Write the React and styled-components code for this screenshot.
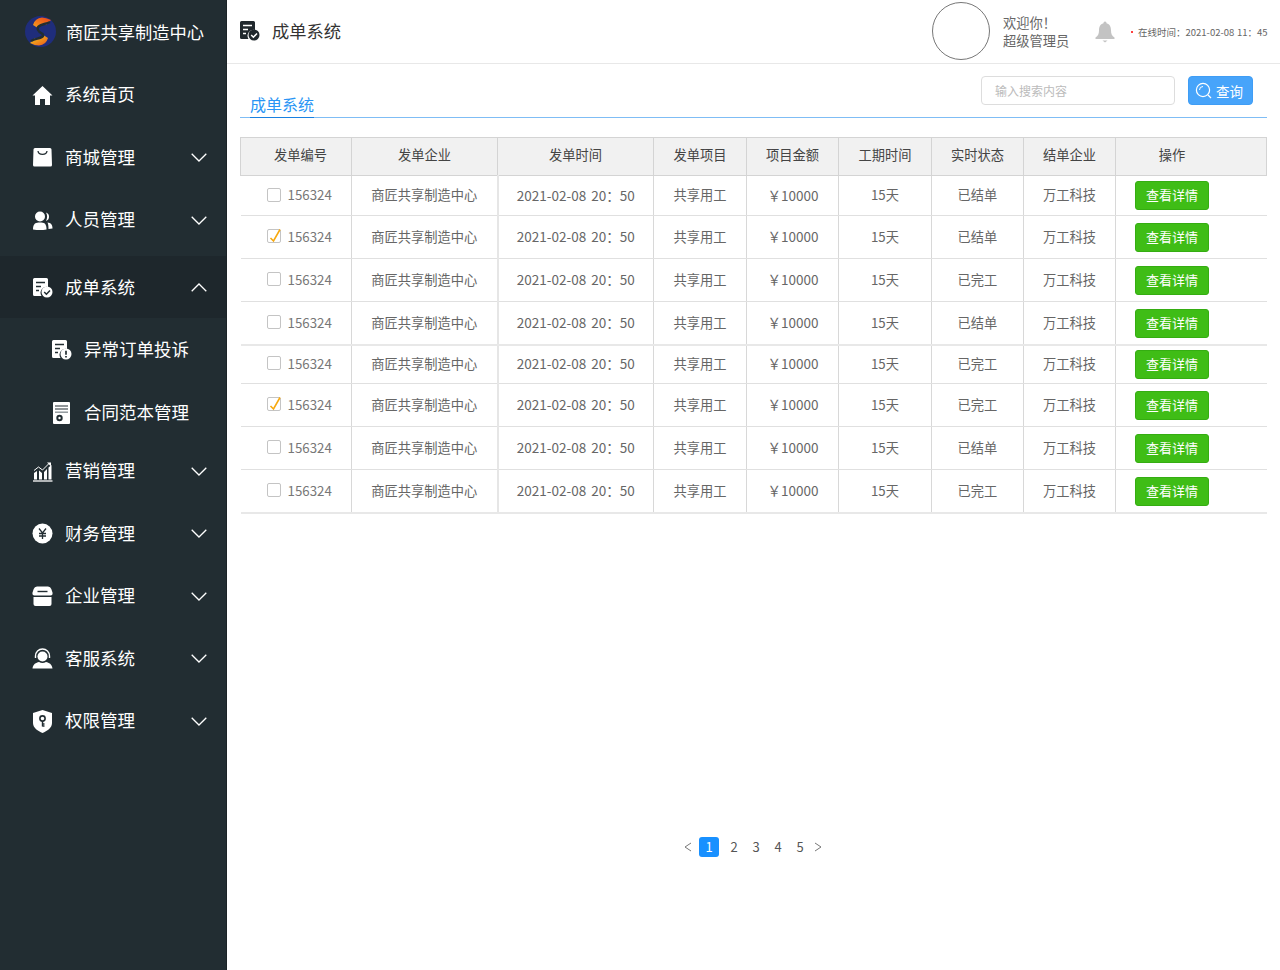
import React from "react";
import styled, { createGlobalStyle } from "styled-components";

const Global = createGlobalStyle`
  html, body { margin: 0; padding: 0; background: #fff; }
  body { font-family: "Noto Sans CJK SC", "Noto Sans", sans-serif; }
  * { box-sizing: border-box; }
`;
const Page = styled.div`display: flex; width: 1280px; height: 970px; overflow: hidden;`;
const Sidebar = styled.aside`
  width: 227px; flex: none; height: 970px; background: #222d32; border-right: 1px solid #1b2327;
  display: flex; flex-direction: column; color: #fff;
`;
const Brand = styled.div`
  height: 64px; display: flex; align-items: center; padding: 0 0 2px 25px; gap: 10px;
  font-size: 17.25px; color: #fff; white-space: nowrap;
`;
const NavItem = styled.div`
  height: ${p => p.$h}px; margin-top: ${p => p.$mt || 0}px; display: flex; align-items: center;
  padding-left: ${p => (p.$sub ? 51 : 32)}px; padding-right: 19px;
  background: ${p => (p.$active ? "#1e272c" : "transparent")};
  font-size: 17.5px; color: #fff; white-space: nowrap;
`;
const NavIcon = styled.span`width: 21px; height: 21px; flex: none; display: flex; align-items: center; justify-content: center; margin-right: 12px;`;
const NavLabel = styled.span`flex: 1; margin-bottom: ${p => (p.$active ? 1 : 3)}px;`;

const Main = styled.main`flex: 1; min-width: 0; display: flex; flex-direction: column;`;
const Topbar = styled.header`
  height: 64px; flex: none; border-bottom: 1px solid #e8e8e8; display: flex; align-items: center;
  padding: 0 13px; color: #333;
`;
const TopTitle = styled.div`display: flex; align-items: center; gap: 12px; font-size: 17.25px; color: #333; flex: 1; padding-bottom: 2px; margin-left: -1px;`;
const Avatar = styled.div`width: 58px; height: 58px; border-radius: 50%; border: 1px solid #777; background: #fff; flex: none; margin-left: -1px; margin-bottom: 1px;`;
const Welcome = styled.div`margin: 0 0 0 13px; font-size: 13.25px; line-height: 18px; color: #666; width: 92px;`;
const Status = styled.div`display: flex; align-items: center; font-size: 9.5px; color: #666; margin-left: 16px; width: 136px; white-space: nowrap; word-spacing: 0.5px;`;
const Dot = styled.span`width: 2px; height: 2px; flex: none; border-radius: 50%; background: #f00; margin-right: 5px;`;

const Content = styled.div`padding: 12px 13px 0 13px; flex: 1; display: flex; flex-direction: column;`;
const TabBar = styled.div`
  height: 42px; flex: none; border-bottom: 1px solid #7fbdf5; display: flex; align-items: flex-end; justify-content: space-between;
  padding-left: 10px; position: relative;
`;
const Tab = styled.div`
  color: #2a96f5; font-size: 16px; line-height: 21px; height: 24px; border-bottom: 1px solid #1a80e0; margin-bottom: -1px; width: 64px; white-space: nowrap;
`;
const Search = styled.div`display: flex; align-items: flex-start; gap: 13px; align-self: flex-start; padding-right: 14px;`;
const SearchBox = styled.div`
  width: 194px; height: 29px; border: 1px solid #ddd; border-radius: 4px; padding-left: 13px; font-size: 12px; line-height: 27px; color: #bbb; background: #fff;
`;
const SearchBtn = styled.div`
  width: 65px; height: 29px; border-radius: 4px; background: #47a4fa; border: 1px solid #3f9df5; color: #fff; font-size: 13.5px; display: flex; align-items: center; padding-left: 6px; gap: 4px;
`;

const Table = styled.table`
  margin-top: 19px; width: 1026px; border-collapse: collapse; table-layout: fixed; font-size: 13.25px; color: #666;
`;
const Th = styled.th`
  height: 38px; background: #f1f1f1; border: 1px solid #d4d4d4; font-weight: 400; color: #444; font-size: 13.25px; padding: 0 0 5px;
  text-align: center;
  &:first-child { padding-left: 9px; }
  &:last-child { padding-right: 38px; }
`;
const Td = styled.td`
  border-bottom: ${p => (p.$thick ? "2px solid #e8e8e8" : "1px solid #e0e0e0")}; border-left: 1px solid #d8d8d8; padding: ${p => (p.$thick ? 1 : 0)}px 0 2px; text-align: center; white-space: nowrap;
  &:first-child { border-left: none; }
  &:last-child { border-right: none; }
  &:nth-child(3) { border-left: 2px solid #e6e6e6; }
`;
const Row = styled.tr`height: ${p => p.$h}px;`;
const IdCell = styled.div`display: flex; align-items: center; justify-content: flex-start; padding-left: 26px; gap: 7px; font-size: 13.3px; color: #777;`;
const Check = styled.span`width: 14px; height: 14px; border: 1px solid #c4c4c4; border-radius: 2px; background: #fff; display: inline-flex; position: relative; flex: none;`;
const Tick = styled.svg`position: absolute; left: 0; top: -2px;`;
const ActionBtn = styled.span`
  display: inline-block; width: 74px; height: 29px; line-height: 25px; border-radius: 3px; background: #3fbd16; border: 1px solid #35ad12; color: #fff; font-size: 13px; text-align: center;
`;
const ActionWrap = styled.div`padding: 2px 0 0 19px; text-align: left; display: flex;`;
const Money = styled.span`font-size: 13.5px; margin-left: 1px;`;
const DateText = styled.span`font-size: 13.5px; word-spacing: 2px;`;

const Pager = styled.div`
  margin-top: 323px; display: flex; align-items: center; justify-content: center; font-size: 13px; color: #555; padding-right: 3px;
`;
const PageNum = styled.span`
  width: ${p => (p.$active ? 20 : 22)}px; height: 20px; line-height: 20px; margin: ${p => (p.$active ? "0 4px 0 2px" : "0")}; text-align: center; border-radius: 3px;
  background: ${p => (p.$active ? "#1890ff" : "transparent")}; color: ${p => (p.$active ? "#fff" : "#555")};
`;
const Arrow = styled.svg`flex: none; margin: 0 ${p => p.$m || 0}px;`;

const W = "#fff", D = "#222d32";
const Home = () => (<svg width="21" height="21" viewBox="0 0 21 21"><path d="M10.5 1 L20.5 10.5 L18 10.5 L18 20 L13 20 L13 14 L8 14 L8 20 L3 20 L3 10.5 L0.5 10.5 Z" fill={W}/></svg>);
const Bag = () => (<svg width="21" height="21" viewBox="0 0 21 21"><path d="M3 1 H18 a1.5 1.5 0 0 1 1.5 1.5 L20 18 a1.5 1.5 0 0 1 -1.5 1.5 H2.5 A1.5 1.5 0 0 1 1 18 L1.5 2.5 A1.5 1.5 0 0 1 3 1Z" fill={W}/><path d="M6 4 C6.5 8.5 14.5 8.5 15 4" fill="none" stroke={D} strokeWidth="1.3"/></svg>);
const Users = () => (<svg width="21" height="21" viewBox="0 0 21 21"><circle cx="8" cy="6.5" r="5" fill={W}/><path d="M1 19.5 C1 13 4 12.5 8 12.5 C12 12.5 14.5 13 14.5 19.5 Q8 20.5 1 19.5Z" fill={W}/><path d="M14 2.5 A4.5 4.5 0 0 1 14 11 C15.5 8 15.5 5 14 2.5Z M15.5 12.5 C19 13 20.5 14.5 20.5 18.5 L16.5 19 C16.5 16 16.3 14 15.5 12.5Z" fill={W}/></svg>);
const Order = ({ badge = "check", fill = W, bg = D, size = 21 }) => (
  <svg width={size} height={size} viewBox="0 0 21 21">
    <path d="M2.5 1 H14.5 A1.5 1.5 0 0 1 16 2.5 V10 A6 6 0 0 0 9.5 19 H2.5 A1.5 1.5 0 0 1 1 17.5 V2.5 A1.5 1.5 0 0 1 2.5 1Z" fill={fill}/>
    <path d="M4 5.5 H13 M4 9.5 H9 M4 13.5 H7" stroke={bg} strokeWidth="1.6"/>
    <circle cx="15" cy="15" r="5.5" fill={fill}/>
    {badge === "check"
      ? <path d="M12.2 15 L14.4 17.2 L18 13.4" fill="none" stroke={bg} strokeWidth="1.5"/>
      : <path d="M15 11.8 V15.8 M15 16.9 V18.4" stroke={bg} strokeWidth="1.7"/>}
  </svg>
);
const Contract = () => (<svg width="21" height="24" viewBox="0 0 21 24"><rect x="2" y="1" width="17" height="22" rx="1" fill={W}/><path d="M4 5 H17 M4 8 H17" stroke={D} strokeWidth="1.2"/><rect x="4" y="10.5" width="13" height="1.4" fill="#8a9296"/><circle cx="8.5" cy="17" r="3.2" fill={D}/><circle cx="8.5" cy="17" r="1.2" fill={W}/></svg>);
const Chart = () => (<svg width="21" height="21" viewBox="0 0 21 21"><path d="M1 20 H20.5" stroke={W} strokeWidth="1.3"/><path d="M2 18.5 V12 L5 10 V18.5Z M7 18.5 V9.5 L10 12 V18.5Z M12 18.5 V11 L15 8 V18.5Z M16.5 18.5 V6.5 L19.5 4 V18.5Z" fill={W}/><path d="M2 9.5 L6.5 6 L10.5 9 L17 2.5" fill="none" stroke={W} strokeWidth="1"/><path d="M15 1.5 H19 V5.5Z" fill={W}/></svg>);
const Yen = () => (<svg width="21" height="21" viewBox="0 0 21 21"><circle cx="10.5" cy="10.5" r="10" fill={W}/><path d="M7 5.5 L10.5 10 L14 5.5 M10.5 10 V16 M7 10.5 H14 M7 13 H14" fill="none" stroke={D} strokeWidth="1.3"/></svg>);
const Store = () => (<svg width="21" height="21" viewBox="0 0 21 21"><path d="M5 0.5 H16 Q18.5 0.5 19.3 3 L20.5 6.5 Q21 9.5 18.5 9.5 H2.5 Q0 9.5 0.5 6.5 L1.7 3 Q2.5 0.5 5 0.5Z" fill={W}/><path d="M1.5 11 H19.5 V18 Q19.5 20 17.5 20 H3.5 Q1.5 20 1.5 18Z" fill={W}/><path d="M5.5 5.5 H15.5" stroke={D} strokeWidth="1.4"/></svg>);
const Service = () => (<svg width="21" height="21" viewBox="0 0 21 21"><path d="M3.5 10 V8 A7 7 0 0 1 17.5 8 V10" fill="none" stroke={W} strokeWidth="1.4"/><circle cx="10.5" cy="8.5" r="5" fill={W}/><path d="M0.5 20.5 C1 16 4 14.8 7 14 Q10.5 16 14 14 C17 14.8 20 16 20.5 20.5Z" fill={W}/></svg>);
const Shield = () => (<svg width="21" height="24" viewBox="0 0 21 24"><path d="M10.5 1 L20 4 V14 C20 19 15 22 10.5 24 C6 22 1 19 1 14 V4Z" fill={W}/><circle cx="10.5" cy="9.5" r="2.6" fill="none" stroke={D} strokeWidth="1.6"/><path d="M10.5 12 V17.5 M10.5 15 H12.5 M10.5 17 H12.5" stroke={D} strokeWidth="1.4"/></svg>);
const Chevron = ({ up }) => (<svg width="16" height="9" viewBox="0 0 16 9" style={{ flex: "none" }}><path d={up ? "M0.7 8.3 L8 1 L15.3 8.3" : "M0.7 0.7 L8 8 L15.3 0.7"} fill="none" stroke={W} strokeWidth="1.3"/></svg>);
const Logo = () => (
  <svg width="31" height="31" viewBox="0 0 31 31" style={{ flex: "none" }}>
    <defs>
      <linearGradient id="lgTop" x1="0" y1="1" x2="1" y2="0"><stop offset="0" stopColor="#f7a01c"/><stop offset="1" stopColor="#e8401c"/></linearGradient>
      <linearGradient id="lgBot" x1="0" y1="0" x2="1" y2="1"><stop offset="0" stopColor="#f9d21c"/><stop offset="1" stopColor="#e9541c"/></linearGradient>
    </defs>
    <circle cx="15.5" cy="15.5" r="15.5" fill="#1f2d7b"/>
    <path d="M8 9 Q10 2 17 1.5 Q21 1.5 26 4 L21 9 Q16 8 12 11.5Z" fill="url(#lgTop)"/>
    <path d="M23 22 Q21 29 14 29.5 Q10 29.5 5 27 L10 22 Q15 23 19 19.5Z" fill="url(#lgBot)"/>
    <path d="M25 6 C18 9 11 9 13 14 C15 18 19 17 18 20 C16 23 10 22 6 25" fill="none" stroke={D} strokeWidth="2.4"/>
  </svg>
);

const Bell = () => (<svg width="20" height="22" viewBox="0 0 20 22"><path d="M10 0.5 a1.5 1.5 0 0 1 1.5 1.7 C15 3 16 6 16 9.5 C16 13 17 15 19.5 16.5 V18 H0.5 V16.5 C3 15 4 13 4 9.5 C4 6 5 3 8.5 2.2 A1.5 1.5 0 0 1 10 0.5Z" fill="#c3c3c3"/><path d="M7.5 19.5 H12.5 L10 21.5Z" fill="#c3c3c3"/></svg>);
const Lens = () => (<svg width="17" height="17" viewBox="0 0 17 17" style={{ flex: "none" }}><circle cx="8" cy="8" r="6.6" fill="none" stroke="#fff" strokeWidth="1.2"/><path d="M13 13 L16 16" stroke="#fff" strokeWidth="1.3"/><path d="M4.5 8 A3.5 3.5 0 0 1 8 4.5" fill="none" stroke="#fff" strokeWidth="1"/></svg>);

const nav = [
  { label: "系统首页", icon: <Home />, h: 62 },
  { label: "商城管理", icon: <Bag />, h: 63, chev: "down" },
  { label: "人员管理", icon: <Users />, h: 62, chev: "down" },
  { label: "成单系统", icon: <Order />, h: 62, mt: 5, chev: "up", active: true },
  { label: "异常订单投诉", icon: <Order badge="alert" />, h: 63, sub: true },
  { label: "合同范本管理", icon: <Contract />, h: 63, sub: true },
  { label: "营销管理", icon: <Chart />, h: 62, mt: -4, chev: "down" },
  { label: "财务管理", icon: <Yen />, h: 63, chev: "down" },
  { label: "企业管理", icon: <Store />, h: 62, chev: "down" },
  { label: "客服系统", icon: <Service />, h: 63, chev: "down" },
  { label: "权限管理", icon: <Shield />, h: 62, chev: "down" },
];
const cols = [["发单编号", 111], ["发单企业", 146], ["发单时间", 156], ["发单项目", 93], ["项目金额", 92], ["工期时间", 93], ["实时状态", 92], ["结单企业", 92], ["操作", 151]];
const rows = [
  { h: 40, s: "已结单" }, { h: 43, s: "已结单", c: 1 }, { h: 43, s: "已完工" }, { h: 43, s: "已结单", t: 1 },
  { h: 39, s: "已完工" }, { h: 43, s: "已完工", c: 1 }, { h: 43, s: "已结单" }, { h: 43, s: "已完工", t: 1 },
];

export default function App() {
  return (
    <Page>
      <Global />
      <Sidebar>
        <Brand><Logo />商匠共享制造中心</Brand>
        {nav.map(n => (
          <NavItem key={n.label} $h={n.h} $mt={n.mt} $sub={n.sub} $active={n.active}>
            <NavIcon>{n.icon}</NavIcon>
            <NavLabel $active={n.active}>{n.label}</NavLabel>
            {n.chev && <Chevron up={n.chev === "up"} />}
          </NavItem>
        ))}
      </Sidebar>
      <Main>
        <Topbar>
          <TopTitle><Order fill="#20282d" bg="#fff" size={21} />成单系统</TopTitle>
          <Avatar />
          <Welcome>欢迎你！<br />超级管理员</Welcome>
          <Bell />
          <Status><Dot />在线时间：2021-02-08 11：45</Status>
        </Topbar>
        <Content>
          <TabBar>
            <Tab>成单系统</Tab>
            <Search>
              <SearchBox>输入搜索内容</SearchBox>
              <SearchBtn><Lens />查询</SearchBtn>
            </Search>
          </TabBar>
          <Table>
            <colgroup>{cols.map(([t, w]) => <col key={t} width={w} />)}</colgroup>
            <thead><tr>{cols.map(([t]) => <Th key={t}>{t}</Th>)}</tr></thead>
            <tbody>
              {rows.map((r, i) => (
                <Row key={i} $h={r.h}>
                  <Td $thick={r.t}>
                    <IdCell>
                      <Check>{r.c ? <Tick width="14" height="16" viewBox="0 0 14 16"><path d="M2.5 10 L5.5 13 L12 1.5" fill="none" stroke="#f7a90f" strokeWidth="1.6"/></Tick> : null}</Check>
                      156324
                    </IdCell>
                  </Td>
                  <Td $thick={r.t}>商匠共享制造中心</Td>
                  <Td $thick={r.t}><DateText>2021-02-08 20：50</DateText></Td>
                  <Td $thick={r.t}>共享用工</Td>
                  <Td $thick={r.t}><Money>￥10000</Money></Td>
                  <Td $thick={r.t}>15天</Td>
                  <Td $thick={r.t}>{r.s}</Td>
                  <Td $thick={r.t}>万工科技</Td>
                  <Td $thick={r.t}><ActionWrap><ActionBtn>查看详情</ActionBtn></ActionWrap></Td>
                </Row>
              ))}
            </tbody>
          </Table>
          <Pager>
            <Arrow $m={5} width="8" height="10" viewBox="0 0 8 10"><path d="M7 1 L1 5 L7 9" fill="none" stroke="#777"/></Arrow>
            <PageNum $active>1</PageNum>
            <PageNum>2</PageNum><PageNum>3</PageNum><PageNum>4</PageNum><PageNum>5</PageNum>
            <Arrow $m={3} width="8" height="10" viewBox="0 0 8 10"><path d="M1 1 L7 5 L1 9" fill="none" stroke="#777"/></Arrow>
          </Pager>
        </Content>
      </Main>
    </Page>
  );
}
